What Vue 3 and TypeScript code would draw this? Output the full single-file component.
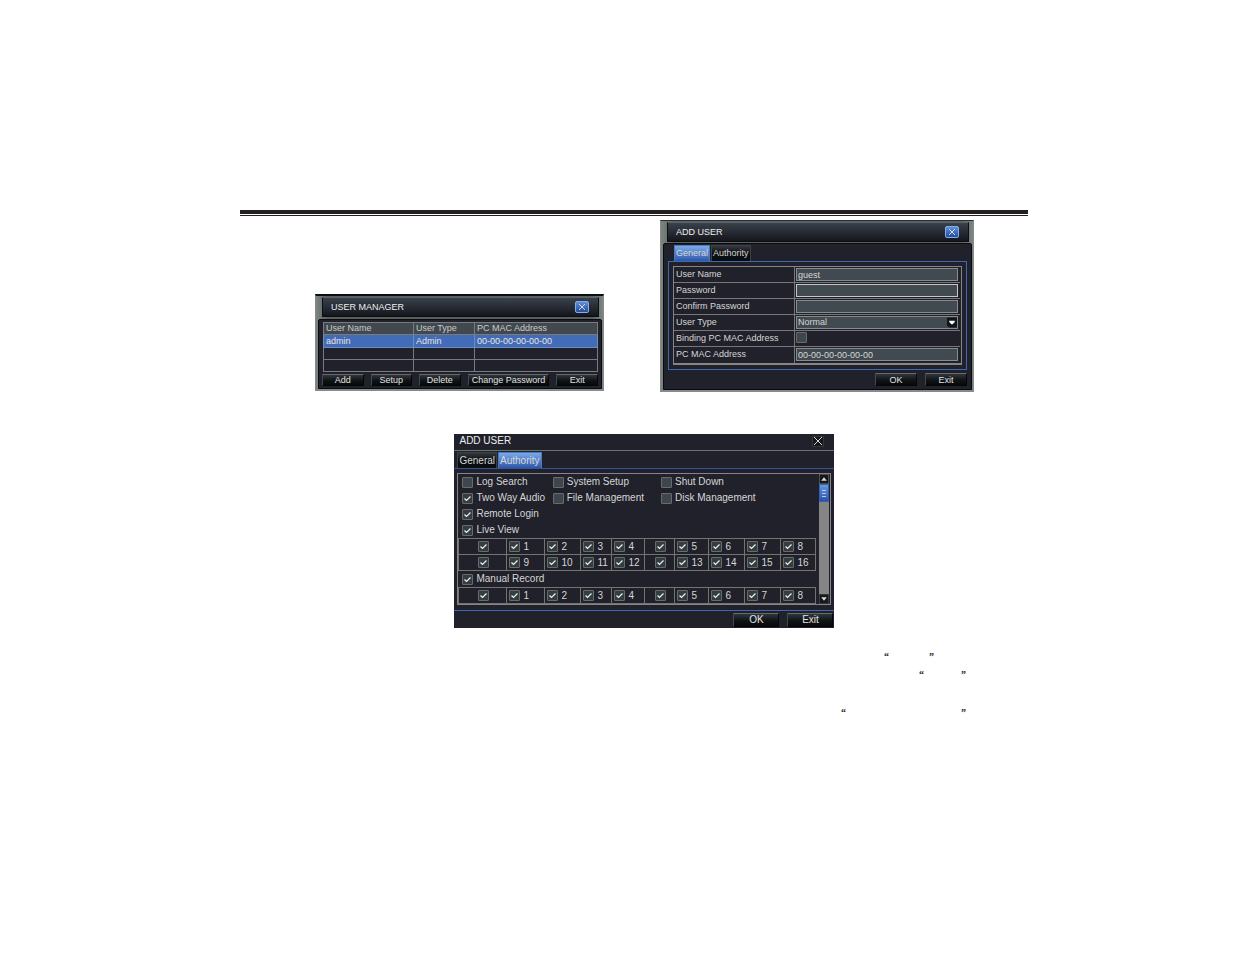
<script setup lang="ts">
import { ref } from 'vue'

interface User { name: string; type: string; mac: string }
interface Permission { id: string; label: string; on: boolean }

const users: User[] = [
  { name: 'admin', type: 'Admin', mac: '00-00-00-00-00-00' },
  { name: '', type: '', mac: '' },
  { name: '', type: '', mac: '' },
]

const userName = ref('guest')
const password = ref('')
const confirmPassword = ref('')
const userType = ref('Normal')
const macAddress = ref('00-00-00-00-00-00')
const bindMac = ref(false)

const permissions = ref<Permission[]>([
  { id: 'log', label: 'Log Search', on: false },
  { id: 'system', label: 'System Setup', on: false },
  { id: 'shutdown', label: 'Shut Down', on: false },
  { id: 'audio', label: 'Two Way Audio', on: true },
  { id: 'file', label: 'File Management', on: false },
  { id: 'disk', label: 'Disk Management', on: false },
  { id: 'login', label: 'Remote Login', on: true },
])

// An empty label is the box that selects the four channels to its right.
const firstRow: string[] = ['', '1', '2', '3', '4', '', '5', '6', '7', '8']
const secondRow: string[] = ['', '9', '10', '11', '12', '', '13', '14', '15', '16']
const groups = [
  { id: 'live', label: 'Live View', rows: [firstRow, secondRow] },
  { id: 'record', label: 'Manual Record', rows: [firstRow] },
]
</script>

<template>
  <main class="page">
    <div class="rule"></div>

    <div class="upper">
      <section class="dialog manager" aria-label="User manager">
        <header class="bar">
          <h2>USER MANAGER</h2>
          <button class="close blue" aria-label="Close user manager">
            <svg viewBox="0 0 8 8"><path d="M1 1L7 7M7 1L1 7" /></svg>
          </button>
        </header>
        <div class="body">
          <table class="users">
            <colgroup><col class="c-name"><col class="c-type"><col></colgroup>
            <thead><tr><th>User Name</th><th>User Type</th><th>PC MAC Address</th></tr></thead>
            <tbody>
              <tr v-for="(u, i) in users" :key="i" :class="{ selected: i === 0 }">
                <td>{{ u.name }}</td><td>{{ u.type }}</td><td>{{ u.mac }}</td>
              </tr>
            </tbody>
          </table>
          <div class="actions">
            <button class="btn">Add</button>
            <button class="btn">Setup</button>
            <button class="btn">Delete</button>
            <button class="btn wide">Change Password</button>
            <button class="btn">Exit</button>
          </div>
        </div>
      </section>

      <section class="dialog general" aria-label="Add user, general">
        <header class="bar">
          <h2>ADD USER</h2>
          <button class="close blue" aria-label="Close add user">
            <svg viewBox="0 0 8 8"><path d="M1 1L7 7M7 1L1 7" /></svg>
          </button>
        </header>
        <div class="body">
          <nav class="tabs">
            <button class="tab active">General</button>
            <button class="tab">Authority</button>
          </nav>
          <div class="frame">
            <form class="fields" @submit.prevent>
              <div class="field"><label for="user-name">User Name</label><div><input id="user-name" v-model="userName" type="text"></div></div>
              <div class="field"><label for="password">Password</label><div><input id="password" v-model="password" class="lit" type="password"></div></div>
              <div class="field"><label for="confirm">Confirm Password</label><div><input id="confirm" v-model="confirmPassword" type="password"></div></div>
              <div class="field">
                <label for="user-type">User Type</label>
                <div class="select">
                  <select id="user-type" v-model="userType"><option>Normal</option></select>
                  <svg viewBox="0 0 9 9"><path d="M0 0H9V9H2L0 7Z" fill="#10161a" /><path d="M2 3H7V4L5 6H4L2 4Z" fill="#fff" /></svg>
                </div>
              </div>
              <div class="field"><label for="bind">Binding PC MAC Address</label><div><input id="bind" v-model="bindMac" type="checkbox"></div></div>
              <div class="field"><label for="mac">PC MAC Address</label><div><input id="mac" v-model="macAddress" type="text"></div></div>
            </form>
          </div>
          <div class="confirm">
            <button class="btn">OK</button>
            <button class="btn">Exit</button>
          </div>
        </div>
      </section>
    </div>

    <div class="lower">
      <section class="authority" aria-label="Add user, authority">
        <header class="plain">
          <h2>ADD USER</h2>
          <button class="close" aria-label="Close authority">
            <svg viewBox="0 0 8 8"><path d="M0 0L8 8M8 0L0 8" /></svg>
          </button>
        </header>
        <nav class="tabs">
          <button class="tab">General</button>
          <button class="tab active">Authority</button>
        </nav>
        <div class="panel">
          <div class="content">
            <div class="permissions">
              <label v-for="p in permissions" :key="p.id"><input v-model="p.on" type="checkbox">{{ p.label }}</label>
            </div>
            <template v-for="g in groups" :key="g.id">
              <label class="group"><input type="checkbox" checked>{{ g.label }}</label>
              <table class="channels">
                <colgroup>
                  <col class="w48"><col class="w38"><col class="w36"><col class="w31"><col class="w33">
                  <col class="w30"><col class="w34"><col class="w36"><col class="w36"><col class="w35">
                </colgroup>
                <tbody>
                  <tr v-for="(row, r) in g.rows" :key="r">
                    <td v-for="(c, i) in row" :key="i" :class="{ all: !c }">
                      <label><input type="checkbox" checked :aria-label="c ? undefined : 'Select group'">{{ c }}</label>
                    </td>
                  </tr>
                </tbody>
              </table>
            </template>
          </div>
          <div class="scroll">
            <button aria-label="Scroll up"><svg viewBox="0 0 9 9"><path d="M0 0H9V9H0Z" fill="#15191c" stroke="#777" /><path d="M2 6L4.500 3L7 6Z" fill="#ddd" /></svg></button>
            <div class="thumb"><i></i><i></i><i></i></div>
            <button class="down" aria-label="Scroll down"><svg viewBox="0 0 9 9"><path d="M0 0H9V9H0Z" fill="#15191c" stroke="#555" /><path d="M2 3L4.500 6L7 3Z" fill="#ddd" /></svg></button>
          </div>
        </div>
        <footer>
          <button class="btn">OK</button>
          <button class="btn">Exit</button>
        </footer>
      </section>
    </div>

    <div class="quotes">
      <p class="short"><span>“</span><span>”</span></p>
      <p class="middle"><span>“</span><span>”</span></p>
      <p class="long"><span>“</span><span>”</span></p>
    </div>
  </main>
</template>

<style>
body { margin: 0; background: #fff; }
</style>

<style scoped>
* { box-sizing: border-box; }
.page {
  padding: 210px 207px 0 240px;
  font: 9px/12px "Liberation Sans", Arial, sans-serif;
  color: #d6d6d6;
}
button, input, select { font: inherit; color: inherit; margin: 0; padding: 0; border: 0; }
h2 { margin: 0; font-size: 9px; line-height: 12px; font-weight: 400; color: #eee; }
.rule { height: 6px; border-top: 4px solid #231f20; border-bottom: 1px solid #231f20; }

.upper {
  display: grid;
  grid-template-columns: 75fr 289fr 56fr 314fr 54fr;
  align-items: start;
  padding-top: 4px;
}
.dialog {
  background: linear-gradient(90deg, #7d8582, #59605f 4%, #59605f 96%, #7d8582);
  border: solid #858b89;
  border-width: 0 1px 2px;
}
.manager { grid-column: 2; margin-top: 74px; border-top: 2px solid #0b0e10; }
.general { grid-column: 4; border-top: 1px solid #25302f; }
.bar {
  display: flex;
  align-items: center;
  justify-content: space-between;
  height: 20px;
  margin: 1px 4px 2px 6px;
  padding: 0 9px 0 8px;
  background: linear-gradient(#3a414a, #20232b 70%, #14161b);
  border: 1px solid #0c0e11;
  border-top-color: #596169;
}
.general .bar { height: 20px; margin-bottom: 1px; }
.close { display: grid; place-items: center; width: 12px; height: 11px; background: #15181b; border: 1px solid #33383b; }
.close svg { width: 8px; height: 8px; fill: none; stroke: #d8d8d8; }
.close.blue { width: 14px; height: 12px; background: linear-gradient(#5d91dd, #244b9f); border: 1px solid #86aee6; border-radius: 2px; }
.body { background: #20212a; border: 1px solid #090b0e; border-radius: 2px 2px 0 0; margin: 0 1px 0 2px; }

.btn {
  display: grid;
  place-items: center;
  height: 13px;
  width: 42px;
  background: linear-gradient(#30363a, #101416 55%, #07090a);
  border: 1px solid #050607;
  border-top-color: #63696c;
  border-left-color: #43494c;
  white-space: nowrap;
  line-height: 10px;
  color: #e2e2e2;
}

.manager .body { padding: 2px 3px 2px 4px; }
.users { width: 100%; border-collapse: collapse; table-layout: fixed; }
.c-name { width: 90px; }
.c-type { width: 61px; }
.users th, .users td { height: 12px; padding: 0 2px; border: 1px solid #777b7e; font-weight: 400; text-align: left; line-height: 11px; }
.users th { background: #41494e; color: #c9caca; }
.users .selected td { height: 13px; background: #426bb8; border-color: #6f8bc0; color: #e8e4dc; }
.actions { display: flex; gap: 7px; margin: 2px 0 0 -1px; }
.actions .btn { flex: 41 1 0; width: auto; height: 12px; }
.actions .wide { flex-grow: 83; }

.tabs { display: flex; gap: 1px; }
.tab {
  height: 15px;
  padding: 0 1px;
  background: linear-gradient(#34393e, #0b0e10 50%);
  border: solid #3b4144;
  border-width: 1px 1px 0;
  line-height: 13px;
}
.tab.active { background: linear-gradient(#7ba9e8, #2d58aa); border-color: #4c78c0; }
.general .body { padding: 1px 4px 3px 4px; }
.general .tabs { padding-left: 6px; }
.general .tab { height: 16px; }
.frame { border: 1px solid #3e68b2; padding: 4px; }
.fields { border: 1px solid #858585; border-bottom-width: 2px; padding-right: 1px; }
.field { display: grid; grid-template-columns: 120fr 166fr; height: 16px; border-bottom: 1px solid #777; }
.field:last-child { border-bottom: 0; }
.field > label { padding-left: 2px; line-height: 15px; white-space: nowrap; }
.field > div { border-left: 1px solid #777; padding: 1px 2px 0 1px; }
.field input:not([type="checkbox"]), .field select {
  display: block;
  width: 100%;
  height: 13px;
  padding: 0 1px;
  background: #414a50;
  border: 1px solid #868b8d;
  border-radius: 0;
  outline: 0;
  line-height: 11px;
}
.field .lit { border-color: #c5c8c8 !important; }
.field select { appearance: none; }
.select { display: grid; }
.select > * { grid-area: 1 / 1; }
.select svg { width: 10px; height: 11px; justify-self: end; margin: 1px; pointer-events: none; }
.confirm { display: flex; justify-content: flex-end; gap: 8px; padding-top: 3px; }

input[type="checkbox"] {
  appearance: none;
  display: block;
  flex: none;
  width: 11px;
  height: 11px;
  background: #3d474d;
  border: 1px solid #6b6b66;
  border-radius: 1px;
}
input[type="checkbox"]:checked {
  background: #333d42 url("data:image/svg+xml,%3Csvg xmlns='http://www.w3.org/2000/svg' viewBox='0 0 9 9'%3E%3Cpath d='M1.500 4.500L3.500 6.500L7.500 2.500' fill='none' stroke='%23f0f0f0' stroke-width='1.200'/%3E%3C/svg%3E") center / 9px 9px;
}

.lower { display: grid; grid-template-columns: 215fr 379fr 194fr; margin-top: 42px; }
.authority { grid-column: 2; background: #20212a; font-size: 10px; }
.authority h2 { font-size: 10px; }
.plain { display: flex; align-items: center; justify-content: space-between; height: 17px; padding: 0 10px 2px 5px; border-bottom: 1px solid #66756d; }
.authority .tabs { padding: 1px 3px 0; border-bottom: 1px solid #34519a; }
.authority .tab { height: 16px; padding: 0 1px; }
.panel { display: flex; justify-content: space-between; margin: 4px 3px 0; border: 1px solid #858585; height: 132px; }
.content { flex: 1; }
.content label { display: flex; align-items: center; gap: 3px; white-space: nowrap; }
.permissions { display: grid; grid-template-columns: 90fr 108fr 155fr; padding-left: 4px; grid-auto-rows: 16px; }
.group { height: 16px; padding-left: 4px; }
.channels { width: 100%; border-collapse: collapse; table-layout: fixed; }
.channels td { height: 16px; padding: 0 0 0 2px; border: 1px solid #73736f; line-height: 11px; }
.channels .all label { justify-content: center; gap: 0; }
.w48 { width: 48px; } .w38 { width: 38px; } .w36 { width: 36px; } .w35 { width: 35px; }
.w34 { width: 34px; } .w33 { width: 33px; } .w31 { width: 31px; } .w30 { width: 30px; }
.scroll { display: flex; flex-direction: column; width: 10px; margin: 0 1px 0 3px; background: #858585; }
.scroll button { display: block; height: 10px; background: #15191c; }
.scroll svg { display: block; width: 10px; height: 10px; }
.thumb { display: grid; align-content: center; gap: 2px; height: 18px; padding: 0 2px; background: linear-gradient(#6599e0, #2950aa); border: 1px solid #3560b4; }
.thumb i { height: 1px; background: #b9cdf0; }
.down { margin-top: auto; }
footer { display: flex; justify-content: flex-end; gap: 8px; margin-top: 5px; padding: 2px 1px 1px; border-top: 1px solid #3e68b2; }
footer .btn { width: 46px; height: 14px; }

.quotes { padding: 20px 62px 0 0; color: #231f20; font: 700 10px/18px "Liberation Serif", serif; }
.quotes p { display: flex; justify-content: space-between; margin: 0 0 0 auto; }
.quotes .short { width: 50px; margin-right: 32px; }
.quotes .middle { width: 47px; }
.quotes .long { width: 125px; margin-top: 20px; }
</style>
